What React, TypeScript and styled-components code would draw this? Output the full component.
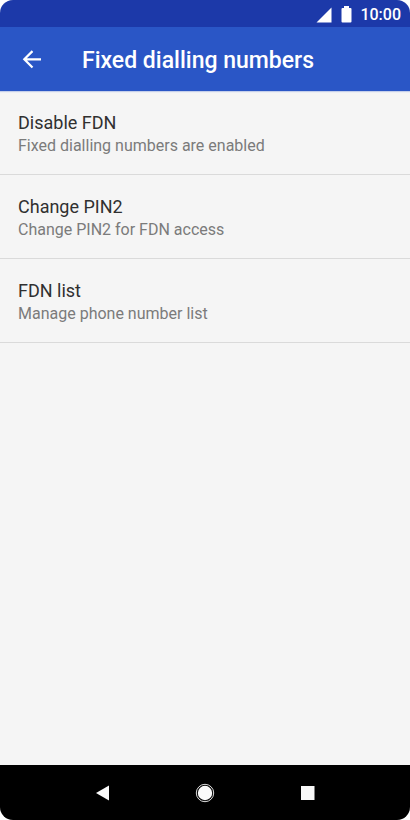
import React from "react";
import styled, { createGlobalStyle } from "styled-components";

const GlobalStyle = createGlobalStyle`
  * { box-sizing: border-box; }
  body { margin: 0; background: #fff; font-family: Roboto, "Liberation Sans", sans-serif; }
  button { font: inherit; color: inherit; border: 0; padding: 0; background: none; cursor: pointer; }
  svg { display: block; }
`;

const Screen = styled.div`
  min-height: 100vh;
  display: flex;
  flex-direction: column;
  border-radius: 13px;
  overflow: hidden;
  background: #f5f5f5;
`;

const StatusBar = styled.div`
  height: 27px;
  display: flex;
  align-items: center;
  justify-content: flex-end;
  padding: 2px 9px 0 16px;
  background: #1c39a9;
  color: #fff;
`;

const Clock = styled.time`
  margin-left: 8px;
  font-size: 16px;
  line-height: 21px;
  font-weight: 500;
`;

const AppBar = styled.header`
  height: 64px;
  display: flex;
  align-items: center;
  padding: 0 18px;
  background: #2a56c6;
  color: #fff;
  box-shadow: 0 1px 1px #c5cfea;
`;

const BackButton = styled.button`
  width: 28px;
  height: 28px;
  display: grid;
  place-items: center;
`;

const Title = styled.h1`
  margin: 0 0 0 36px;
  padding-top: 4px;
  font-size: 23px;
  line-height: 28px;
  font-weight: 500;
`;

const List = styled.ul`
  flex: 1;
  margin: 0;
  padding: 0;
  list-style: none;
`;

const Item = styled.li`
  border-bottom: 1px solid #dadada;
`;

const ItemButton = styled.button`
  width: 100%;
  min-height: 83px;
  display: flex;
  flex-direction: column;
  justify-content: center;
  padding: 2px 18px 0;
  text-align: left;
`;

const Label = styled.span`
  font-size: 18px;
  line-height: 24px;
  color: #303030;
`;

const Summary = styled.span`
  font-size: 16px;
  line-height: 22px;
  color: #7b7b7b;
`;

const NavBar = styled.nav`
  height: 55px;
  display: grid;
  grid-template-columns: repeat(3, 1fr);
  width: 75%;
  margin: 0 auto;
`;

const NavArea = styled.footer`
  background: #000;
`;

const NavButton = styled.button`
  display: grid;
  place-items: center;
`;

const items = [
  { label: "Disable FDN", summary: "Fixed dialling numbers are enabled" },
  { label: "Change PIN2", summary: "Change PIN2 for FDN access" },
  { label: "FDN list", summary: "Manage phone number list" },
];

export default function App() {
  return (
    <>
      <GlobalStyle />
      <Screen>
        <StatusBar>
          <svg width="44" height="18" viewBox="0 0 44 18" fill="#fff" aria-hidden="true">
            <path d="M8.5 16.5H23.5V1.5Z" />
            <path d="M36 0H41V2H42.5Q43.5 2 43.5 3V15.5Q43.5 16.5 42.5 16.5H34.500Q33.500 16.5 33.500 15.500V3Q33.500 2 34.500 2H36Z" />
          </svg>
          <Clock>10:00</Clock>
        </StatusBar>
        <AppBar>
          <BackButton aria-label="Back">
            <svg width="20" height="20" viewBox="0 0 20 20" fill="none" stroke="#fff" strokeWidth="2.2" aria-hidden="true">
              <path d="M19 10.300H3M10.500 2.100L2.300 10.300L10.500 18.500" />
            </svg>
          </BackButton>
          <Title>Fixed dialling numbers</Title>
        </AppBar>
        <List>
          {items.map((item) => (
            <Item key={item.label}>
              <ItemButton>
                <Label>{item.label}</Label>
                <Summary>{item.summary}</Summary>
              </ItemButton>
            </Item>
          ))}
        </List>
        <NavArea>
          <NavBar>
            <NavButton aria-label="Back">
              <svg width="14" height="16" viewBox="0 0 14 16" aria-hidden="true">
                <path d="M0 8L13 0.5V15.5Z" fill="#fafafa" />
              </svg>
            </NavButton>
            <NavButton aria-label="Home">
              <svg width="20" height="20" viewBox="0 0 20 20" aria-hidden="true">
                <circle cx="10" cy="10" r="8.7" fill="none" stroke="#ddd" strokeWidth="1" />
                <circle cx="10" cy="10" r="7.2" fill="#fafafa" />
              </svg>
            </NavButton>
            <NavButton aria-label="Recent apps">
              <svg width="14" height="14" viewBox="0 0 14 14" aria-hidden="true">
                <rect width="13.500" height="14" fill="#f8f8f8" />
              </svg>
            </NavButton>
          </NavBar>
        </NavArea>
      </Screen>
    </>
  );
}
